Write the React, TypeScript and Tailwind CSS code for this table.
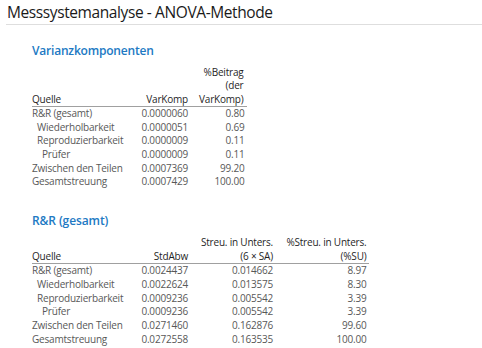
type Row = { label: string; indent: number; values: string[] };

const varRows: Row[] = [
  { label: "R&R (gesamt)", indent: 0, values: ["0.0000060", "0.80"] },
  { label: "Wiederholbarkeit", indent: 1, values: ["0.0000051", "0.69"] },
  { label: "Reproduzierbarkeit", indent: 1, values: ["0.0000009", "0.11"] },
  { label: "Prüfer", indent: 2, values: ["0.0000009", "0.11"] },
  { label: "Zwischen den Teilen", indent: 0, values: ["0.0007369", "99.20"] },
  { label: "Gesamtstreuung", indent: 0, values: ["0.0007429", "100.00"] },
];

const rrRows: Row[] = [
  { label: "R&R (gesamt)", indent: 0, values: ["0.0024437", "0.014662", "8.97"] },
  { label: "Wiederholbarkeit", indent: 1, values: ["0.0022624", "0.013575", "8.30"] },
  { label: "Reproduzierbarkeit", indent: 1, values: ["0.0009236", "0.005542", "3.39"] },
  { label: "Prüfer", indent: 2, values: ["0.0009236", "0.005542", "3.39"] },
  { label: "Zwischen den Teilen", indent: 0, values: ["0.0271460", "0.162876", "99.60"] },
  { label: "Gesamtstreuung", indent: 0, values: ["0.0272558", "0.163535", "100.00"] },
];

const indentCls = ["pl-0", "pl-[5px]", "pl-[10px]"];

function Body({ rows, last }: { rows: Row[]; last: number }) {
  return (
    <tbody className="text-[#585858]">
      {rows.map((r) => (
        <tr key={r.label}>
          <td className={`${indentCls[r.indent]} p-0 whitespace-nowrap`}>{r.label}</td>
          {r.values.map((v, i) => (
            <td key={i} className={`p-0 text-right ${i === last ? "pr-[2px]" : ""}`}>{v}</td>
          ))}
        </tr>
      ))}
    </tbody>
  );
}

export default function App() {
  return (
    <div className="w-[482px] h-[348px] overflow-hidden bg-white font-['Open_Sans','Noto_Sans',sans-serif]">
      {/* report title */}
      <h1 className="pt-[2px] pl-[7px] text-[15.5px] leading-[20px] tracking-[-0.4px] font-normal text-[#1a1a1a]">
        Messsystemanalyse - ANOVA-Methode
      </h1>
      <div className="mt-[2px] ml-[6px] border-t border-[#dedede]" />

      <div className="pl-[32px]">
        {/* variance components */}
        <h2 className="mt-[18px] text-[12px] leading-[16px] tracking-[-0.2px] font-semibold text-[#2179c3]">
          Varianzkomponenten
        </h2>
        <table className="mt-[6.5px] table-fixed border-collapse text-[10px] leading-[13.6px] tracking-[-0.2px]">
          <colgroup>
            <col className="w-[99px]" />
            <col className="w-[57px]" />
            <col className="w-[58.5px]" />
          </colgroup>
          <thead className="text-[#1f1f1f]">
            <tr className="border-b border-[#a0a0a0]">
              <th className="p-0 font-medium text-left align-bottom">Quelle</th>
              <th className="p-0 font-medium text-right align-bottom">VarKomp</th>
              <th className="p-0 pr-[3px] font-medium text-right align-bottom">
                %Beitrag<br />(der<br />VarKomp)
              </th>
            </tr>
          </thead>
          <Body rows={varRows} last={1} />
        </table>

        {/* R&R totals */}
        <h2 className="mt-[24.5px] text-[12px] leading-[16px] tracking-[-0.1px] font-semibold text-[#2179c3]">
          R&amp;R (gesamt)
        </h2>
        <table className="mt-[6.5px] table-fixed border-collapse text-[10px] leading-[13.7px] tracking-[-0.2px]">
          <colgroup>
            <col className="w-[99px]" />
            <col className="w-[57px]" />
            <col className="w-[85px]" />
            <col className="w-[95.5px]" />
          </colgroup>
          <thead className="text-[#1f1f1f]">
            <tr className="border-b border-[#a0a0a0]">
              <th className="p-0 font-medium text-left align-bottom">Quelle</th>
              <th className="p-0 font-medium text-right align-bottom">StdAbw</th>
              <th className="p-0 font-medium text-right align-bottom whitespace-nowrap">
                Streu. in Unters.<br />(6 × SA)
              </th>
              <th className="p-0 pr-[2px] font-medium text-right align-bottom whitespace-nowrap">
                %Streu. in Unters.<br />(%SU)
              </th>
            </tr>
          </thead>
          <Body rows={rrRows} last={2} />
        </table>
      </div>
    </div>
  );
}
